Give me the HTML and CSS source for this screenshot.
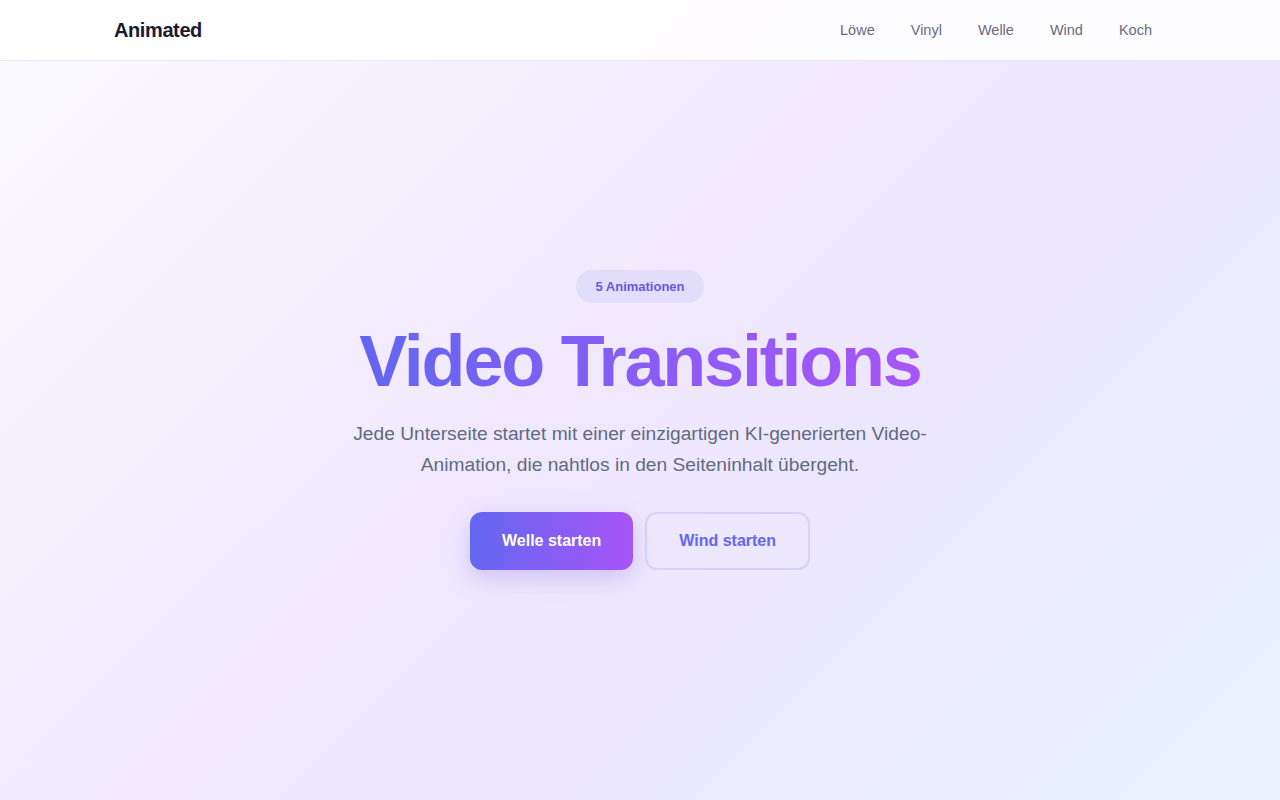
FILE: index.html
```html
<!DOCTYPE html>
<html lang="de">
<head>
<meta charset="utf-8">
<title>Animated – Video Transitions</title>
<link rel="stylesheet" href="styles.css">
</head>
<body>
<header class="site-header">
  <div class="container header-inner">
    <a class="logo" href="#">Animated</a>
    <nav class="nav">
      <a href="#">Löwe</a>
      <a href="#">Vinyl</a>
      <a href="#">Welle</a>
      <a href="#">Wind</a>
      <a href="#">Koch</a>
    </nav>
  </div>
</header>
<main class="hero">
  <div class="hero-content">
    <span class="badge">5 Animationen</span>
    <h1 class="title">Video Transitions</h1>
    <p class="subtitle">Jede Unterseite startet mit einer einzigartigen KI-generierten Video-Animation, die nahtlos in den Seiteninhalt übergeht.</p>
    <div class="actions">
      <a class="btn btn-primary" href="#">Welle starten</a>
      <a class="btn btn-secondary" href="#">Wind starten</a>
    </div>
  </div>
</main>
</body>
</html>
```

FILE: styles.css
```css
* { box-sizing: border-box; }
html, body { margin: 0; padding: 0; }
body {
  font-family: "Liberation Sans", Arial, sans-serif;
  min-height: 100vh;
  background: linear-gradient(135deg, #fbfaff 0%, #f1e8fd 45%, #ece7fd 65%, #e6f3ff 100%);
  color: #1a1a2e;
}
a { text-decoration: none; }
.container {
  max-width: 1100px;
  margin: 0 auto;
  padding: 0 24px;
}
.site-header {
  height: 61px;
  background: rgba(255, 255, 255, 0.85);
  border-bottom: 1px solid #ebe8f3;
}
.header-inner {
  height: 60px;
  display: flex;
  align-items: center;
  justify-content: space-between;
}
.logo {
  font-size: 20px;
  font-weight: 700;
  color: #1a1a2e;
  letter-spacing: -0.4px;
}
.nav {
  display: flex;
  gap: 36px;
  padding-right: 14px;
}
.nav a {
  font-size: 14.5px;
  color: #6b6b80;
}
.hero {
  min-height: calc(100vh - 61px);
  display: flex;
  align-items: center;
  justify-content: center;
  padding-bottom: 22px;
}
.hero-content {
  display: flex;
  flex-direction: column;
  align-items: center;
  text-align: center;
}
.badge {
  display: inline-block;
  padding: 10px 19px;
  border-radius: 999px;
  background: #e2ddfb;
  color: #6659e0;
  font-size: 13px;
  line-height: 13px;
  font-weight: 700;
}
.title {
  margin: 18px 0 0;
  font-size: 72px;
  font-weight: 700;
  letter-spacing: -2.2px;
  line-height: 80px;
  background: linear-gradient(90deg, #6366f1 0%, #8b5cf6 55%, #a855f7 100%);
  -webkit-background-clip: text;
  background-clip: text;
  color: transparent;
}
.subtitle {
  margin: 17px 0 0;
  max-width: 600px;
  font-size: 19.2px;
  line-height: 31px;
  color: #5f6b85;
}
.actions {
  margin-top: 32px;
  display: flex;
  gap: 12px;
}
.btn {
  display: inline-block;
  height: 58px;
  border-radius: 12px;
  font-size: 16px;
  font-weight: 700;
}
.btn-primary {
  line-height: 58px;
  padding: 0 32px;
  border: none;
  background: linear-gradient(90deg, #6366f1, #a855f7);
  color: #ffffff;
  box-shadow: 0 8px 24px rgba(124, 92, 246, 0.28);
}
.btn-secondary {
  line-height: 54px;
  background: transparent;
  color: #6366f1;
  border: 2px solid #d6d1f6;
  padding: 0 32px;
}
```
